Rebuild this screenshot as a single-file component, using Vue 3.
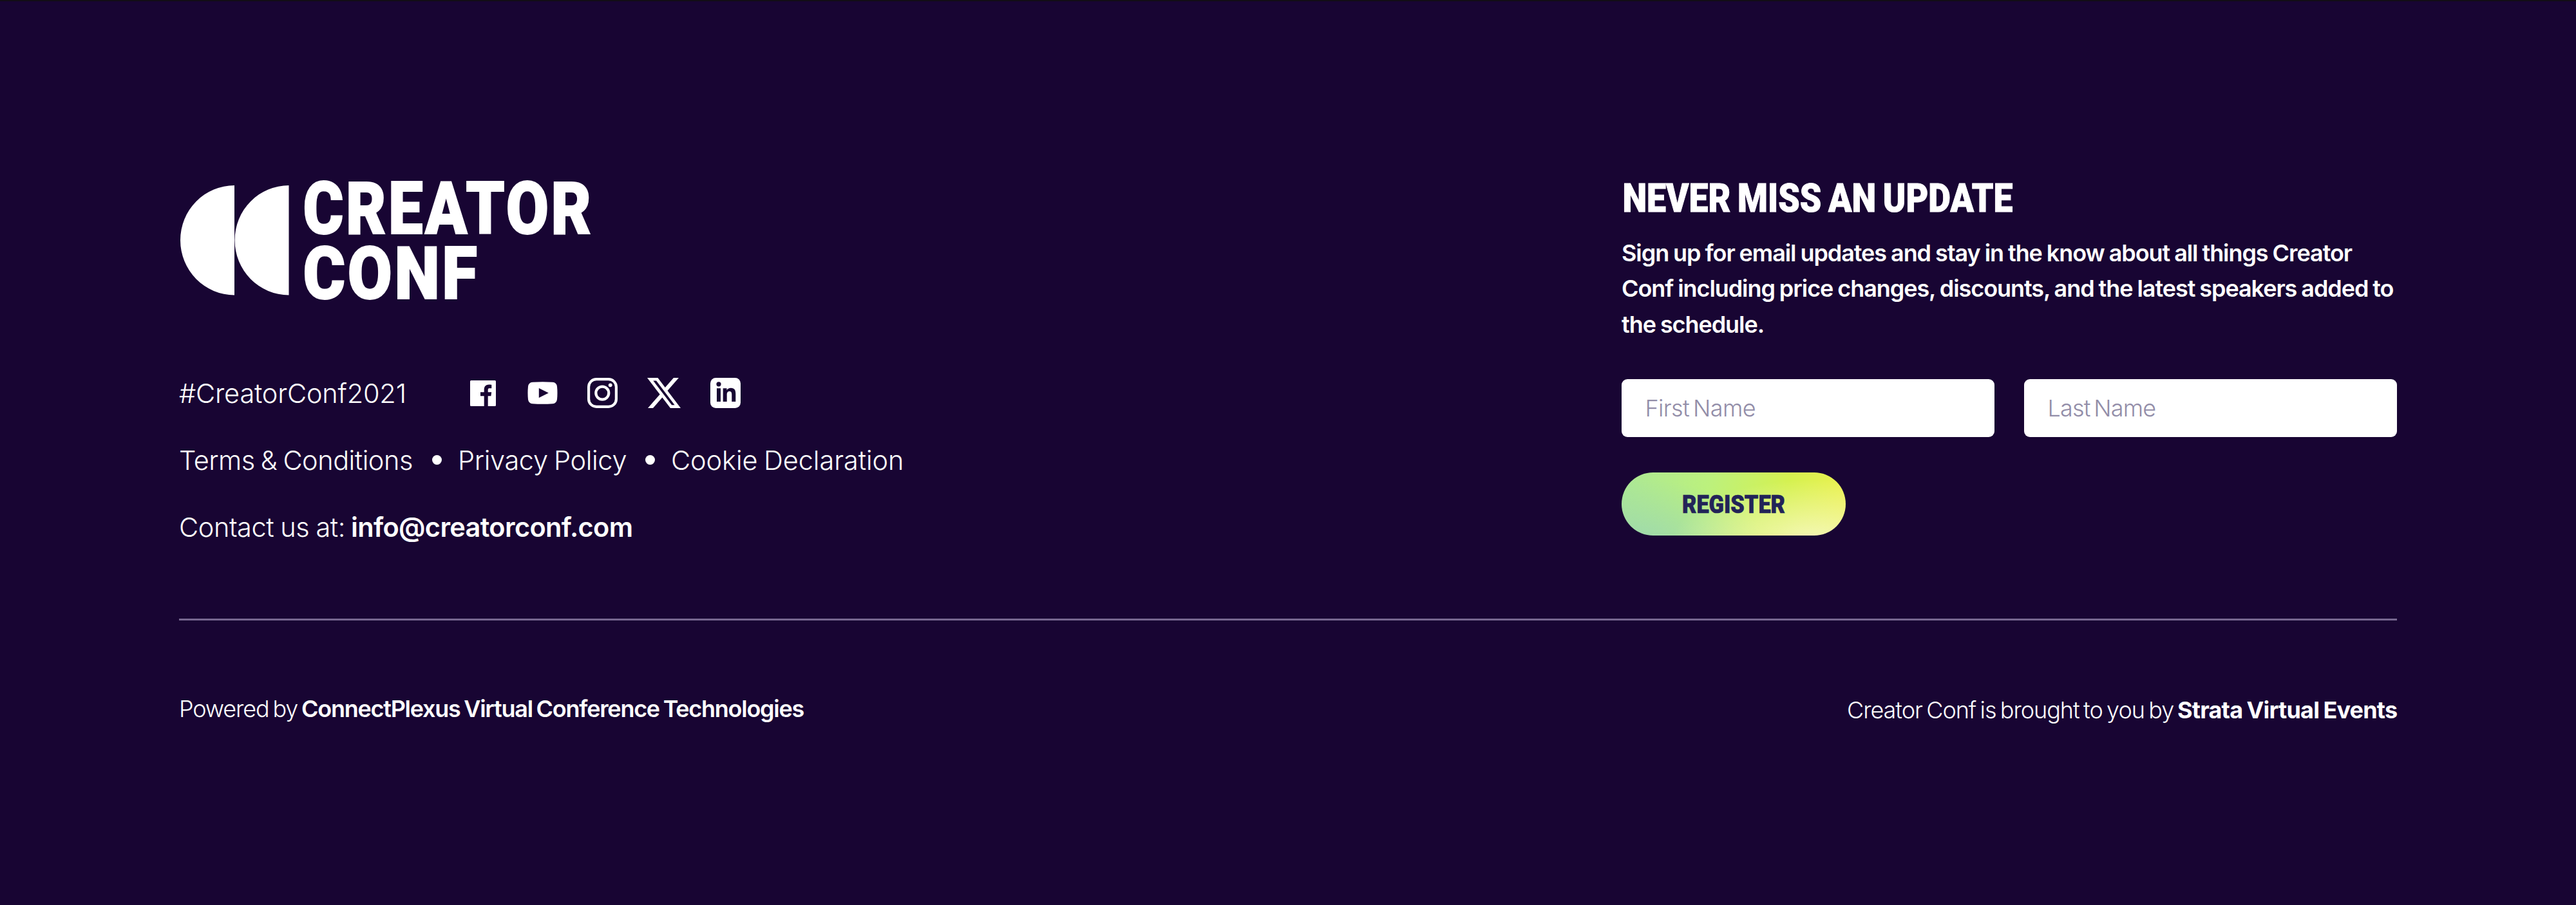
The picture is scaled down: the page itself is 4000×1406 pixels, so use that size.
<script setup>
const legalLinks = [
  { label: 'Terms & Conditions', cls: 'terms' },
  { label: 'Privacy Policy', cls: 'privacy' },
  { label: 'Cookie Declaration', cls: 'cookie' },
]
</script>

<template>
  <footer class="footer">
    <div class="top">
      <section class="brand">
        <svg class="logo" width="700" height="190" viewBox="0 0 700 190" aria-label="Creator Conf">
          <path d="M86 8A84 85.200 0 0 0 86 178.400ZM170.500 8A84 85.200 0 0 0 170.500 178.400Z" fill="#fff" />
          <text class="wordmark" x="192.500" y="83" textLength="451" lengthAdjust="spacingAndGlyphs">CREATOR</text>
          <text class="wordmark" x="192.500" y="183.500" textLength="274" lengthAdjust="spacingAndGlyphs">CONF</text>
        </svg>

        <div class="social">
          <span class="hashtag">#CreatorConf2021</span>
          <a class="facebook" aria-label="Facebook">
            <svg width="40" height="40" viewBox="0 0 40 40">
              <path fill-rule="evenodd" d="M1.500 0H38.500Q40 0 40 1.500V38.500Q40 40 38.500 40H27.700V24.200H32.400L33.200 18.300H27.700V14.800C27.700 12.800 28.600 12.200 30.300 12.200H33.300V6.700C32.300 6.500 30.700 6.400 29 6.400C24.600 6.400 21.700 9.200 21.700 14V18.300H16V24.200H21.700V40H1.500Q0 40 0 38.500V1.500Q0 0 1.500 0Z" />
            </svg>
          </a>
          <a class="youtube" aria-label="YouTube">
            <svg width="47" height="35" viewBox="0 0 47 35">
              <path fill-rule="evenodd" d="M8 .7Q23.500-.4 39 .7Q45.300 1.200 46 7.500Q47 17.500 46 27.500Q45.300 33.800 39 34.300Q23.500 35.400 8 34.300Q1.700 33.800 1 27.500Q0 17.500 1 7.500Q1.700 1.200 8 .7ZM17.800 10V25L32.800 17.500Z" />
            </svg>
          </a>
          <a class="instagram" aria-label="Instagram">
            <svg width="47" height="47" viewBox="0 0 47 47">
              <rect x="2.100" y="2.100" width="42.800" height="42.800" rx="12" fill="none" stroke="#fff" stroke-width="4.200" />
              <circle cx="23.300" cy="23.600" r="10" fill="none" stroke="#fff" stroke-width="4.200" />
              <circle cx="35.700" cy="11.300" r="2.900" />
            </svg>
          </a>
          <a class="x" aria-label="X">
            <svg width="52" height="47" viewBox="1.254 2.250 21.573 19.500">
              <path d="M18.244 2.250h3.308l-7.227 8.260 8.502 11.240H16.170l-5.214-6.817L4.990 21.750H1.680l7.730-8.835L1.254 2.250H8.080l4.713 6.231zm-1.161 17.520h1.833L7.084 4.126H5.117z" />
            </svg>
          </a>
          <a class="linkedin" aria-label="LinkedIn">
            <svg width="47" height="47" viewBox="0 0 47 47">
              <rect width="47" height="47" rx="8.500" />
              <g fill="#180533">
                <circle cx="13" cy="9.800" r="3.600" />
                <path d="M10 16.300H16V37H10ZM19.700 16.300H25.500V19.200C26.600 17.200 29 15.800 32 15.800C37.700 15.800 39.300 19.500 39.300 25V37H33.300V26.200C33.300 23.200 32.700 21 29.700 21C26.700 21 25.700 23.200 25.700 26.200V37H19.700Z" />
              </g>
            </svg>
          </a>
        </div>

        <nav class="legal">
          <template v-for="(link, i) in legalLinks" :key="link.cls">
            <i v-if="i" class="dot"></i>
            <a :class="link.cls">{{ link.label }}</a>
          </template>
        </nav>

        <p class="contact"><span class="contact-label">Contact us at:</span><b>info@creatorconf.com</b></p>
      </section>

      <section class="signup">
        <h2>
          <svg width="640" height="60" viewBox="0 0 640 60">
            <text x="1.500" y="49" textLength="606" lengthAdjust="spacingAndGlyphs">NEVER MISS AN UPDATE</text>
          </svg>
        </h2>
        <p class="blurb">
          Sign up for email updates and stay in the know about all things Creator<br />
          Conf including price changes, discounts, and the latest speakers added to<br />
          the schedule.
        </p>
        <form @submit.prevent>
          <div class="fields">
            <input class="first" type="text" placeholder="First Name" />
            <input class="last" type="text" placeholder="Last Name" />
          </div>
          <button type="submit">
            <svg width="180" height="50" viewBox="0 0 180 50">
              <text x="10" y="38.500" textLength="160" lengthAdjust="spacingAndGlyphs">REGISTER</text>
            </svg>
          </button>
        </form>
      </section>
    </div>

    <div class="bottom">
      <p><span class="powered">Powered by</span><b class="vendor">ConnectPlexus Virtual Conference Technologies</b></p>
      <p class="right"><span class="brought">Creator Conf is brought to you by</span><b class="owner">Strata Virtual Events</b></p>
    </div>
  </footer>
</template>

<style>
body {
  margin: 0;
  background: #180533;
}
</style>

<style scoped>
.footer {
  box-sizing: border-box;
  width: 4000px;
  height: 1406px;
  padding: 278px 278px 0;
  border-top: 2px solid #120d16;
  background: #180533;
  color: #fff;
  font-family: Inter, "Liberation Sans", sans-serif;
  font-weight: 360;
  white-space: nowrap;
}
p,
h2 {
  margin: 0;
}
.top {
  display: flex;
  justify-content: space-between;
  height: 681px;
  border-bottom: 3px solid #76678f;
}
.logo {
  display: block;
  overflow: visible;
}
.wordmark {
  font: 900 113px Roboto, sans-serif;
  letter-spacing: 4px;
  fill: #fff;
  stroke: #fff;
  stroke-width: 2px;
}
.social {
  display: flex;
  align-items: center;
  height: 52px;
  margin-top: 114.500px;
  padding-bottom: 4px;
  font-size: 41.500px;
}
.social svg {
  display: block;
  fill: #fff;
}
.hashtag {
  width: 451.500px;
  letter-spacing: -0.200px;
}
.youtube {
  margin-left: 49.500px;
}
.instagram {
  margin-left: 45.500px;
}
.x {
  margin-left: 46px;
}
.linkedin {
  margin-left: 46px;
}
.legal {
  display: flex;
  align-items: center;
  height: 50px;
  margin-top: 49px;
  font-size: 41.500px;
}
.terms {
  width: 393px;
  letter-spacing: -0.500px;
  word-spacing: -2px;
}
.privacy {
  width: 291px;
  letter-spacing: -0.350px;
  word-spacing: -2px;
}
.cookie {
  letter-spacing: -0.100px;
  word-spacing: -2px;
}
.dot {
  width: 15px;
  height: 15px;
  margin-right: 25px;
  border-radius: 50%;
  background: #fff;
}
.contact {
  display: flex;
  align-items: center;
  height: 50px;
  margin-top: 54px;
  font-size: 41.500px;
}
.contact-label {
  width: 267px;
  letter-spacing: -0.450px;
  word-spacing: -1px;
}
.contact b {
  font-weight: 600;
  letter-spacing: -0.650px;
}
.signup {
  width: 1204px;
}
h2 {
  height: 60px;
}
h2 svg,
button svg {
  display: block;
  overflow: visible;
}
h2 text {
  font: 900 61.500px Roboto, sans-serif;
  word-spacing: -3px;
  fill: #fff;
  stroke: #fff;
  stroke-width: 1px;
}
.blurb {
  margin-top: 25.500px;
  font-size: 36px;
  font-weight: 600;
  line-height: 55.500px;
  letter-spacing: -1.070px;
  word-spacing: -1px;
}
.fields {
  display: flex;
  gap: 46px;
  margin-top: 56.500px;
}
input {
  box-sizing: border-box;
  width: 579px;
  height: 90px;
  padding: 0 36.500px;
  border: 0;
  border-radius: 9px;
  background: #fff;
  font: 350 36px Inter, "Liberation Sans", sans-serif;
  word-spacing: -3.500px;
}
.first {
  letter-spacing: -0.650px;
}
.last {
  letter-spacing: -0.850px;
}
input::placeholder {
  color: #928da8;
  opacity: 1;
}
button {
  display: flex;
  align-items: center;
  justify-content: center;
  width: 348px;
  height: 98px;
  margin-top: 55.500px;
  padding: 0;
  border: 0;
  border-radius: 49px;
  background:
    radial-gradient(ellipse 220px 95px at 86% 108%, #f4f8b8 0%, #f4f8b800 100%),
    radial-gradient(ellipse 190px 95px at 8% 108%, #9fdaac 0%, #9fdaac00 100%),
    linear-gradient(100deg, #abe796 0%, #bcf17d 38%, #d5f150 72%, #eef150 100%);
}
button text {
  font: 900 39px Roboto, sans-serif;
  fill: #222358;
  stroke: #222358;
  stroke-width: 0.700px;
}
.bottom {
  display: flex;
  justify-content: space-between;
  padding-top: 115px;
  font-size: 36px;
}
.bottom p {
  display: flex;
  height: 44px;
  line-height: 44px;
}
.bottom .right {
  margin-top: 2px;
}
.powered {
  width: 190px;
  letter-spacing: -1.150px;
  word-spacing: -3px;
}
.vendor {
  font-weight: 600;
  letter-spacing: -1.270px;
  word-spacing: -2px;
}
.brought {
  width: 513px;
  letter-spacing: -1.050px;
  word-spacing: -2.700px;
}
.owner {
  width: 341px;
  font-weight: 700;
  letter-spacing: -0.800px;
  word-spacing: -1.500px;
}
</style>
